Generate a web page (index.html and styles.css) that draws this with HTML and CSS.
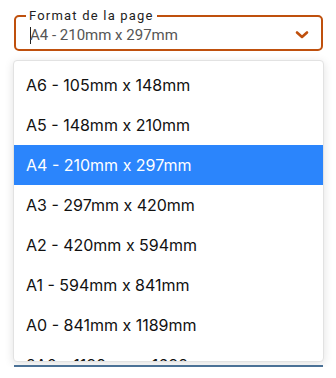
FILE: index.html
```html
<!DOCTYPE html>
<html>
<head>
  <meta charset="UTF-8">
  <title>Format de la page</title>
<link rel="stylesheet" href="styles.css">
</head>
<body>

  <fieldset class="select-box">
    <legend>Format de la page</legend>
    <div class="select-value">
      <span class="caret"></span>
      <span class="value-text">A4 - 210mm x 297mm</span>
      <svg class="chevron" width="14" height="10" viewBox="0 0 14 10">
        <path d="M2 2.5 L7 7 L12 2.5" fill="none" stroke="#bf500d" stroke-width="2.6" stroke-linecap="round" stroke-linejoin="round"/>
      </svg>
    </div>
  </fieldset>

  <div class="menu">
    <div class="option">A6 - 105mm x 148mm</div>
    <div class="option">A5 - 148mm x 210mm</div>
    <div class="option selected">A4 - 210mm x 297mm</div>
    <div class="option">A3 - 297mm x 420mm</div>
    <div class="option">A2 - 420mm x 594mm</div>
    <div class="option">A1 - 594mm x 841mm</div>
    <div class="option">A0 - 841mm x 1189mm</div>
    <div class="option">2A0 - 1189mm x 1682mm</div>
  </div>

  <div class="underline"></div>

</body>
</html>
```

FILE: styles.css
```css
body, html {
  margin: 0;
  padding: 0;
  font-family: Inter, "Noto Sans", sans-serif;
  background: #fff;
}
.select-box {
  margin: 8px 13px 0 14px;
  padding: 0 12px 0 14px;
  border: 2px solid #bf500d;
  border-radius: 5px;
  min-width: 0;
}
.select-box legend {
  margin-left: -4px;
  padding: 0 3px;
  font-family: Roboto, sans-serif;
  font-size: 13px;
  line-height: 15px;
  letter-spacing: 1.2px;
  color: #222;
}
.select-value {
  display: flex;
  align-items: center;
  height: 26px;
  padding-bottom: 2px;
  box-sizing: border-box;
}
.caret {
  width: 1px;
  height: 17px;
  background: #222;
  margin-right: -1px;
}
.value-text {
  flex: 1;
  font-family: Roboto, sans-serif;
  font-size: 15px;
  color: #555;
}
.menu {
  margin: 9px 12px 0 13px;
  height: 302px;
  box-sizing: border-box;
  padding-top: 4px;
  border: 1px solid #e2e2e2;
  border-radius: 4px;
  background: #fff;
  box-shadow: 0 2px 10px rgba(0, 0, 0, 0.12);
  overflow: hidden;
}
.option {
  height: 40px;
  line-height: 40px;
  padding-left: 12px;
  font-size: 16px;
  color: #111;
}
.option.selected {
  background: #2b85fc;
  color: #fff;
}
.underline {
  margin: 3px 13px 0 14px;
  height: 2px;
  background: #4b7196;
}
```
